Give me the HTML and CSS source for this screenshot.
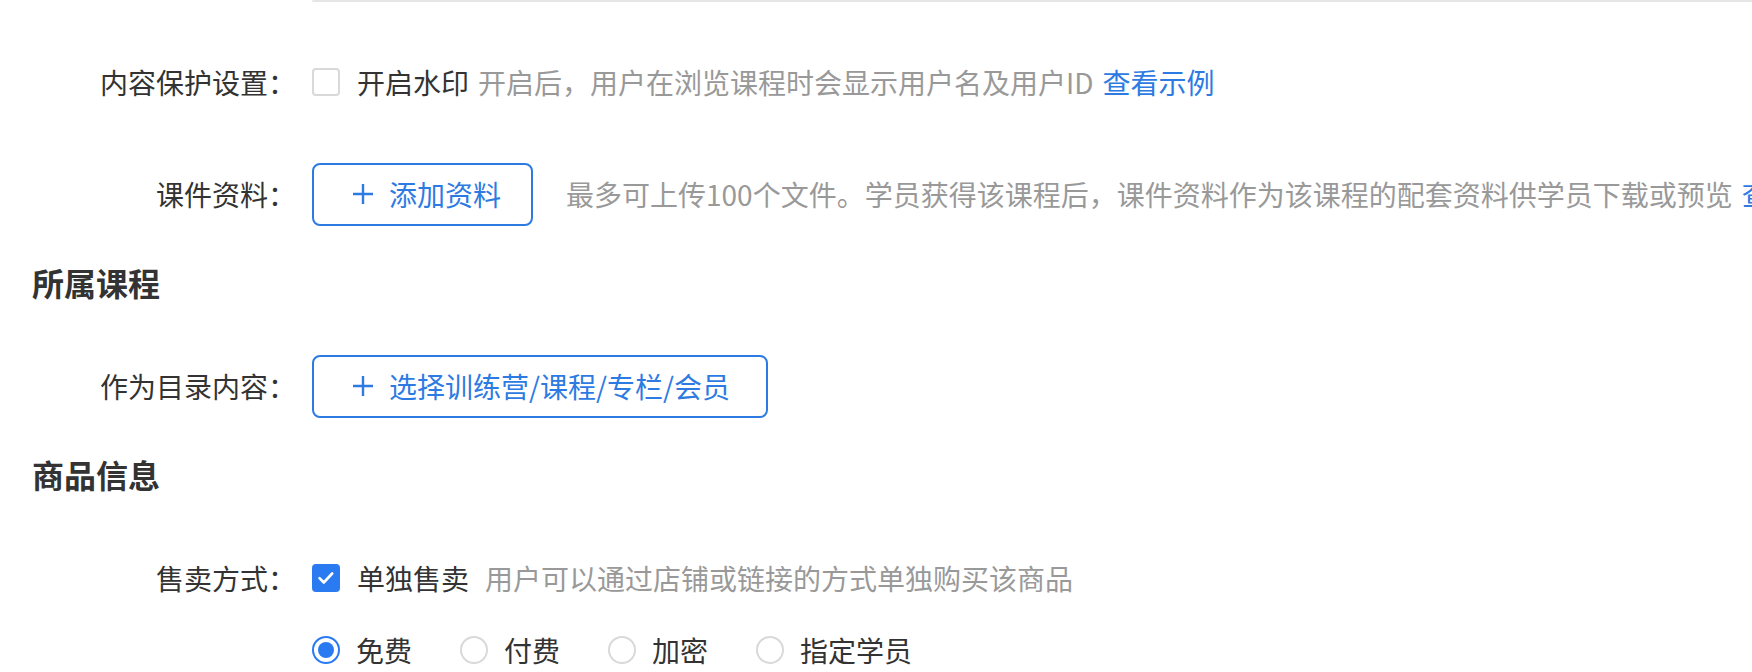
FILE: index.html
```html
<!DOCTYPE html>
<html lang="zh-CN">
<head>
<meta charset="utf-8">
<title>课程设置</title>
<link rel="stylesheet" href="styles.css">
</head>
<body>
<div class="page">
  <div class="prev-box"></div>

  <div class="form-item first">
    <div class="label">内容保护设置：</div>
    <div class="control">
      <span class="checkbox"></span>
      <span class="check-text">开启水印</span>
      <span class="hint tight">开启后，用户在浏览课程时会显示用户名及用户ID</span>
      <a class="link">查看示例</a>
    </div>
  </div>

  <div class="form-item">
    <div class="label">课件资料：</div>
    <div class="control">
      <button class="btn-add">
        <svg class="plus" viewBox="0 0 22 22" width="22" height="22"><path d="M11 1v20M1 11h20" stroke="currentColor" stroke-width="2.4" fill="none"/></svg>
        <span>添加资料</span>
      </button>
      <span class="hint wide">最多可上传100个文件。学员获得该课程后，课件资料作为该课程的配套资料供学员下载或预览</span>
      <a class="link">查看示例</a>
    </div>
  </div>

  <h2 class="section-title">所属课程</h2>

  <div class="form-item">
    <div class="label">作为目录内容：</div>
    <div class="control">
      <button class="btn-add long">
        <svg class="plus" viewBox="0 0 22 22" width="22" height="22"><path d="M11 1v20M1 11h20" stroke="currentColor" stroke-width="2.4" fill="none"/></svg>
        <span>选择训练营/课程/专栏/会员</span>
      </button>
    </div>
  </div>

  <h2 class="section-title">商品信息</h2>

  <div class="form-item">
    <div class="label">售卖方式：</div>
    <div class="control">
      <span class="checkbox checked">
        <svg viewBox="0 0 28 28" width="28" height="28"><path d="M7.5 14.2l4.3 4.3 8.4-9" stroke="#fff" stroke-width="2.6" fill="none" stroke-linecap="round" stroke-linejoin="round"/></svg>
      </span>
      <span class="check-text">单独售卖</span>
      <span class="hint">用户可以通过店铺或链接的方式单独购买该商品</span>
    </div>
  </div>

  <div class="form-item radios">
    <div class="label"></div>
    <div class="control">
      <label class="radio-wrap"><span class="radio checked"></span><span class="radio-text">免费</span></label>
      <label class="radio-wrap"><span class="radio"></span><span class="radio-text">付费</span></label>
      <label class="radio-wrap"><span class="radio"></span><span class="radio-text">加密</span></label>
      <label class="radio-wrap"><span class="radio"></span><span class="radio-text">指定学员</span></label>
    </div>
  </div>
</div>
</body>
</html>
```

FILE: styles.css
```css
* { box-sizing: border-box; }
html, body { margin: 0; padding: 0; background: #fff; }
body {
  font-family: "Noto Sans CJK SC", "Noto Sans", sans-serif;
  font-size: 28px;
  color: #333;
  width: 1752px;
  height: 672px;
  overflow: hidden;
}
.page { padding: 0; }

.prev-box {
  margin-left: 312px;
  height: 2px;
  border-top: 2px solid #e6e6e6;
  border-left: 2px solid #e6e6e6;
  border-top-left-radius: 8px;
}

.form-item {
  display: flex;
  align-items: center;
  height: 64px;
  margin-top: 48px;
  white-space: nowrap;
}
.form-item.radios { margin-top: 8px; }

.label {
  flex: 0 0 296px;
  text-align: right;
  color: #333;
  line-height: 64px;
}
.control {
  margin-left: 16px;
  display: flex;
  align-items: center;
  line-height: 40px;
}

.checkbox {
  width: 28px;
  height: 28px;
  border: 2px solid #d9d9d9;
  border-radius: 4px;
  background: #fff;
  flex: none;
  display: flex;
  align-items: center;
  justify-content: center;
}
.checkbox.checked {
  border-color: #2a7bf2;
  background: #2a7bf2;
}
.checkbox.checked svg { display: block; flex: none; }
.check-text { margin-left: 17px; color: #333; }
.hint { color: #999; margin-left: 16px; }
.hint.tight { margin-left: 9px; }
.hint.wide { margin-left: 33px; }
.link { color: #2d7be2; margin-left: 9px; cursor: pointer; }

.btn-add {
  height: 63px;
  padding: 0 30px 0 38px;
  border: 2px solid #2d7be2;
  border-radius: 8px;
  background: #fff;
  color: #2d7be2;
  font-family: inherit;
  font-size: 28px;
  display: flex;
  align-items: center;
  gap: 15px;
  cursor: pointer;
}
.btn-add.long { padding-right: 36px; }
.plus { display: block; flex: none; }

.section-title {
  margin: 32px 0 0 0;
  padding-left: 32px;
  font-size: 32px;
  font-weight: 600;
  line-height: 48px;
  height: 48px;
  color: #333;
}

.radio-wrap {
  display: flex;
  align-items: center;
  margin-right: 32px;
}
.radio {
  width: 28px;
  height: 28px;
  border: 2px solid #d9d9d9;
  border-radius: 50%;
  flex: none;
  display: flex;
  align-items: center;
  justify-content: center;
}
.radio.checked { border-color: #2a7bf2; }
.radio.checked::after {
  content: "";
  width: 16px;
  height: 16px;
  border-radius: 50%;
  background: #2a7bf2;
}
.radio-text { padding: 0 16px; }
```
